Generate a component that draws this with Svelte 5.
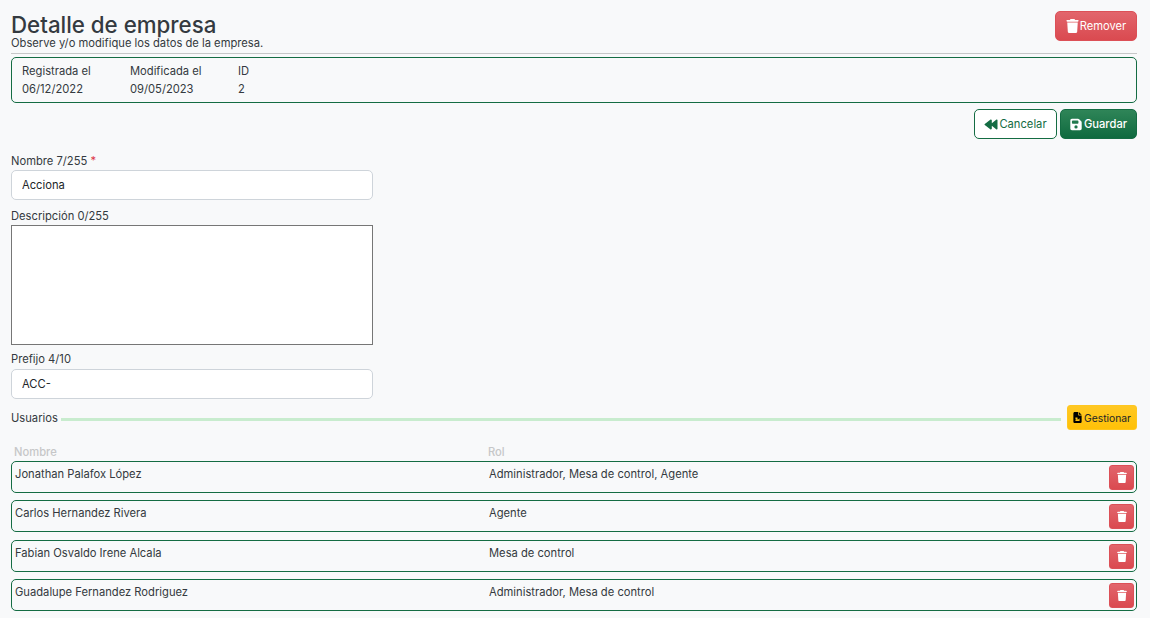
<script>
  const users = [
    { name: 'Jonathan Palafox López', role: 'Administrador, Mesa de control, Agente' },
    { name: 'Carlos Hernandez Rivera', role: 'Agente' },
    { name: 'Fabian Osvaldo Irene Alcala', role: 'Mesa de control' },
    { name: 'Guadalupe Fernandez Rodriguez', role: 'Administrador, Mesa de control' }
  ];
</script>

{#snippet trash()}
  <svg class="ico" viewBox="0 0 448 512" aria-hidden="true">
    <path fill="currentColor" d="M135 18C140 7 151 0 163 0h122c12 0 23 7 29 18l7 14h96c18 0 32 14 32 32s-14 32-32 32H31C14 96 0 82 0 64s14-32 32-32h96l7-14zM32 128h384l-21 339c-2 25-23 45-48 45H101c-25 0-46-20-48-45L32 128z" />
  </svg>
{/snippet}

<main class="page">
  <header class="head">
    <div>
      <h1>Detalle de empresa</h1>
      <p>Observe y/o modifique los datos de la empresa.</p>
    </div>
    <button type="button" class="btn danger remove">{@render trash()}Remover</button>
  </header>
  <hr />

  <section class="meta">
    <div class="cell"><span>Registrada el</span><span>06/12/2022</span></div>
    <div class="cell"><span>Modificada el</span><span>09/05/2023</span></div>
    <div class="cell"><span>ID</span><span>2</span></div>
  </section>

  <div class="actions">
    <button type="button" class="btn outline">
      <svg class="ico" viewBox="0 0 512 512" aria-hidden="true">
        <path fill="currentColor" d="M459 71c12-10 29-12 43-6s10 20 10 35v312c0 15 4 29-10 35s-31 4-43-6L288 308v-104L459 71zM227 71c12-10 29-12 43-6s18 20 18 35v312c0 15-4 29-18 35s-31 4-43-6L11 280c-7-6-11-15-11-24s4-18 11-24L227 71z" />
      </svg>Cancelar
    </button>
    <button type="button" class="btn primary">
      <svg class="ico" viewBox="0 0 448 512" aria-hidden="true">
        <path fill="currentColor" fill-rule="evenodd" d="M64 32C29 32 0 61 0 96v320c0 35 29 64 64 64h320c35 0 64-29 64-64V173c0-17-7-33-19-45l-80-77c-12-12-28-19-45-19H64zm0 96c0-18 14-32 32-32h192c18 0 32 14 32 32v64c0 18-14 32-32 32H96c-18 0-32-14-32-32v-64zm160 160a64 64 0 1 1 0 128 64 64 0 1 1 0-128z" />
      </svg>Guardar
    </button>
  </div>

  <form class="form">
    <label for="nombre">Nombre 7/255 <em>*</em></label>
    <input id="nombre" value="Acciona" />
    <label for="descripcion">Descripción 0/255</label>
    <textarea id="descripcion"></textarea>
    <label class="prefix" for="prefijo">Prefijo 4/10</label>
    <input id="prefijo" value="ACC-" />
  </form>

  <div class="divider">
    <span>Usuarios</span>
    <i></i>
    <button type="button" class="btn warning">
      <svg class="ico" viewBox="0 0 384 512" aria-hidden="true">
        <path fill="currentColor" fill-rule="evenodd" d="M64 0C29 0 0 29 0 64v384c0 35 29 64 64 64h256c35 0 64-29 64-64V160H256c-18 0-32-14-32-32V0H64zm192 0v128h128L256 0zM96 256h96v64H96v-64zm0 96l64-32 64 32 64-64v128H96v-64z" />
      </svg>Gestionar
    </button>
  </div>

  <div class="row labels">
    <span>Nombre</span>
    <span>Rol</span>
  </div>
  <div class="users">
    {#each users as user}
      <div class="row user">
        <span>{user.name}</span>
        <span>{user.role}</span>
        <button type="button" class="btn danger square" aria-label="Eliminar">{@render trash()}</button>
      </div>
    {/each}
  </div>
</main>

<style>
  :global(body) {
    background: #f8f9fa;
  }

  .page {
    padding: 11px 13px 0 11px;
    font: 11.2px/16px Inter, "Open Sans", sans-serif;
    color: #343a40;
  }

  .head {
    display: flex;
    justify-content: space-between;
    align-items: flex-start;
    height: 38px;
  }

  h1 {
    margin: 0;
    padding-top: 2px;
    font-size: 22.3px;
    font-weight: 500;
    line-height: 24px;
    color: #343a40;
  }

  .head p {
    margin: 0;
    line-height: 13px;
  }

  hr {
    margin: 4px 0 3px;
    border: 0;
    border-top: 1px solid #c6c7c8;
  }

  .meta {
    display: flex;
    height: 46px;
    box-sizing: border-box;
    padding: 5px 10px;
    border: 1px solid #146c43;
    border-radius: 5px;
  }

  .cell {
    display: flex;
    flex-direction: column;
    gap: 2px;
    width: 108px;
  }

  .actions {
    display: flex;
    justify-content: flex-end;
    gap: 3px;
    margin-top: 6px;
  }

  .btn {
    display: inline-flex;
    align-items: center;
    justify-content: center;
    gap: 2px;
    box-sizing: border-box;
    padding: 0;
    font: inherit;
    border: 1px solid transparent;
    border-radius: 5px;
  }

  .ico {
    width: 12px;
    height: 13px;
  }

  .remove {
    width: 82px;
    height: 30px;
    gap: 1px;
  }

  .remove .ico {
    width: 13px;
    height: 14px;
  }

  .danger {
    color: #fff;
    background: linear-gradient(#e2656c, #da4a50);
    border-color: #dc5057;
  }

  .outline {
    width: 83px;
    height: 30px;
    gap: 1px;
    color: #146c43;
    background: #fff;
    border-color: #146c43;
  }

  .outline .ico {
    width: 14px;
  }

  .primary {
    width: 77px;
    height: 30px;
    color: #fff;
    font-weight: 500;
    background: linear-gradient(#2f8558, #0f6a3f);
    border-color: #146c43;
  }

  .warning {
    width: 70px;
    height: 25px;
    color: #212529;
    font-size: 10.3px;
    background: linear-gradient(#ffc824, #ffc107);
    border-color: #ffc720;
    border-radius: 3px;
  }

  .warning .ico {
    width: 9px;
    height: 11px;
    color: #000;
  }

  .form {
    display: flex;
    flex-direction: column;
    width: 362px;
    margin-top: 14px;
  }

  label {
    height: 16px;
    padding-bottom: 1px;
    line-height: 16px;
  }

  label.prefix {
    padding-bottom: 2px;
  }

  label em {
    color: #dc3545;
    font-style: normal;
  }

  input {
    box-sizing: border-box;
    height: 30px;
    margin: 0 0 8px;
    padding: 0 10px;
    font: inherit;
    color: #212529;
    background: #fff;
    border: 1px solid #ced4da;
    border-radius: 5px;
  }

  textarea {
    box-sizing: border-box;
    display: block;
    height: 120px;
    margin: 0 0 6px;
    background: #fff;
    border: 1px solid #767676;
    resize: none;
  }

  .divider {
    display: flex;
    align-items: center;
    gap: 3px;
    margin-top: -2px;
    margin-bottom: 15px;
  }

  .divider i {
    flex: 1;
    height: 3px;
    margin: 4px 3px 0 0;
    background: #c8ecce;
  }

  .row {
    display: grid;
    grid-template-columns: 474px 1fr auto;
  }

  .labels {
    padding: 0 3px;
    height: 14px;
    line-height: 14px;
    font-weight: 500;
    color: #c6c7c8;
  }

  .users {
    display: flex;
    flex-direction: column;
    gap: 7.33px;
    margin-top: 2px;
  }

  .user {
    box-sizing: border-box;
    height: 32px;
    padding: 3px 2px 3px 3px;
    border: 1px solid #146c43;
    border-radius: 5px;
    line-height: 18px;
  }

  .square {
    width: 25px;
    height: 25px;
    border-radius: 3px;
  }

  .square .ico {
    width: 10px;
    height: 11px;
  }
</style>
